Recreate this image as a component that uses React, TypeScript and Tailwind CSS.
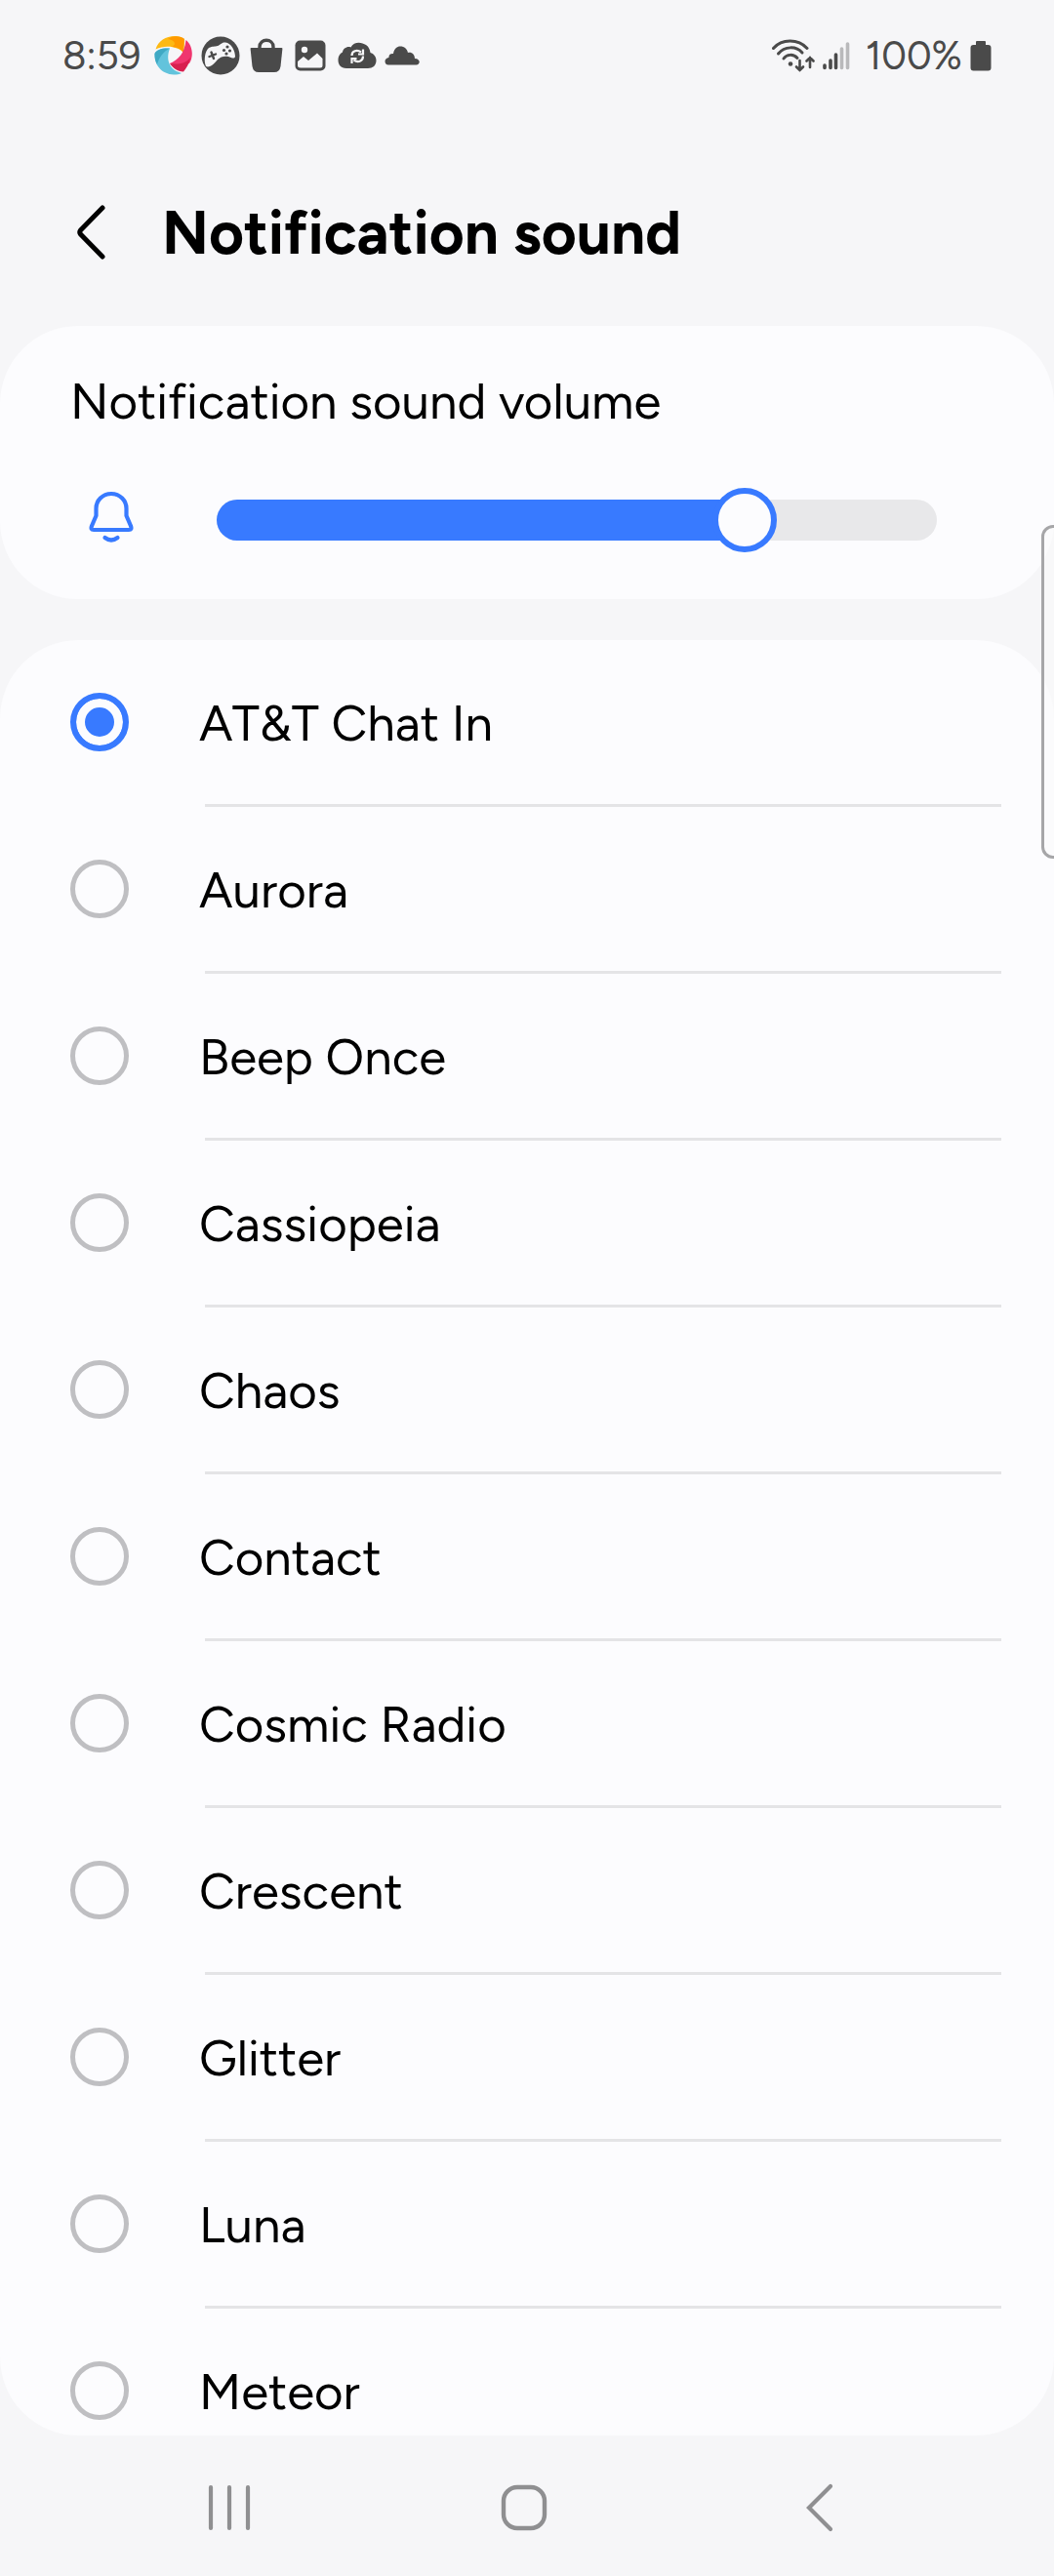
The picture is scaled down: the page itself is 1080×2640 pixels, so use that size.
import React, { useState } from "react";

const sounds = [
  "AT&T Chat In",
  "Aurora",
  "Beep Once",
  "Cassiopeia",
  "Chaos",
  "Contact",
  "Cosmic Radio",
  "Crescent",
  "Glitter",
  "Luna",
  "Meteor",
];

function PinwheelIcon() {
  return (
    <svg viewBox="0 0 40 40" className="size-10" aria-hidden="true">
      <path d="M1.5 13.5 C4 5 12 0 21 0 C25 0 28.500 1 31 3 L30 17 C25 11 12 8.500 1.500 13.500Z" fill="#fdb913" />
      <path d="M14 3 C20 -1 27 0 31 3 L30 17.500 C28 13 23 11 17 11 C24 9 21 4 14 3Z" fill="#ff9a00" />
      <path d="M32.500 4 C39 9 41 20 36 28 C31 30 24 31 16 28 C25 24 31 18 32.500 4Z" fill="#f0366f" />
      <path d="M37 22 C36 28 33 33 30 36.500 C24 36 19 33 16 28 C23 29 32 29 37 22Z" fill="#d81f4f" />
      <path d="M16 12.500 C8 12 2 14 0.500 18 C0 30 8 39 20 39.500 C23 39.500 26 39 28 38 C17 35 11 26 16 12.500Z" fill="#62c3dc" />
      <path d="M16 12.500 C8 12 2 14 0.500 18 C0.500 22 1 26 3 29 C5 22 9 16 16 12.500Z" fill="#3fa9c4" />
    </svg>
  );
}

function GameIcon() {
  return (
    <svg viewBox="0 0 40 40" className="size-10" aria-hidden="true">
      <circle cx="20" cy="20" r="19.500" fill="#4a4a4a" />
      <path
        d="M5 31 C2.500 25 4 15 8 12 C12 10 14 11 17 10 C20 9 21 6 25 6.500 C31 7 35 15 35 21 C34 24 31 22 28 21 C24 20 20 21 17 24 C14 28 9 33 5 31Z"
        fill="#f6f6f8"
      />
      <path d="M8.500 21 L15 18.500 M10.500 16.500 L13 23" stroke="#4a4a4a" strokeWidth="2.400" strokeLinecap="round" />
      <g fill="#4a4a4a">
        <circle cx="27" cy="11" r="1.600" />
        <circle cx="23.500" cy="14.500" r="1.600" />
        <circle cx="29.500" cy="15" r="1.600" />
        <circle cx="26" cy="18" r="1.600" />
      </g>
    </svg>
  );
}

function BagIcon() {
  return (
    <svg viewBox="0 0 34 36" className="h-9 w-[34px]" aria-hidden="true">
      <path d="M1.500 10 H32.500 Q33.500 10 33.400 11 L31.500 29 Q30.500 35 25 35 H9 Q3.500 35 2.500 29 L0.600 11 Q0.500 10 1.500 10Z" fill="#4a4a4a" />
      <path d="M10 11 V9 C10 0 24 0 24 9 V11" fill="none" stroke="#4a4a4a" strokeWidth="3.400" />
    </svg>
  );
}

function PictureIcon() {
  return (
    <svg viewBox="0 0 32 32" className="size-8" aria-hidden="true">
      <rect x="0.500" y="0.500" width="31" height="31" rx="5" fill="#4a4a4a" />
      <circle cx="10" cy="10" r="3.200" fill="#f6f6f8" />
      <path d="M3 22 L9 17 L14 21 L23 13.500 L28.500 19 V26 Q28.500 28.500 26 28.500 H6 Q3 28.500 3 26Z" fill="#f6f6f8" />
    </svg>
  );
}

function CloudSyncIcon() {
  return (
    <svg viewBox="0 0 40 28" className="h-7 w-10" aria-hidden="true">
      <path
        d="M9 27 C3 27 0.500 23 0.500 18.500 C0.500 14 3 11.500 5 10.500 C5.500 6.500 10 4 13.500 5.500 C16 1 21 0 25.500 1.500 C31 3 33 7 33.500 11 C37 12 39.500 15 39.500 19 C39.500 24 36 27 31 27Z"
        fill="#4a4a4a"
      />
      <g fill="none" stroke="#f6f6f8" strokeWidth="2.200">
        <path d="M14.500 14 C14.500 9 20 7.500 24 10.500 M26 14.500 C26 20 20.500 21.500 16.500 18.500" />
        <path d="M26 7.500 V12.500 H21 M14.500 22 V17 H19.500" />
      </g>
    </svg>
  );
}

function CloudIcon() {
  return (
    <svg viewBox="0 0 36 20" className="h-5 w-9" aria-hidden="true">
      <path
        d="M4 19.500 C-0.500 19.500 -1 12.500 4.500 12 C4 9 6.500 7.500 9 8 C10 2.500 13 0.500 16 0.500 C20.500 0.500 23 3 24 7 C28 6 31 9 31 13 C37 13 37 19.500 32.500 19.500Z"
        fill="#4a4a4a"
      />
    </svg>
  );
}

function WifiIcon() {
  return (
    <svg viewBox="0 0 44 34" className="h-[34px] w-11" aria-hidden="true">
      <g fill="none" stroke="#4a4a4a" strokeWidth="3" strokeLinecap="round">
        <path d="M1.500 9.500 C10 -0.500 27 -0.500 36 9.500" />
        <path d="M6.500 15 C13 7 25 7 31 14" />
        <path d="M12 20 C15 15.500 22 15 26 19.500" />
        <path d="M28.500 22 V32 M25 28.500 L28.500 32 L32 28.500" strokeWidth="2.600" />
        <path d="M39 29 V19 M35.500 22.500 L39 19 L42.500 22.500" strokeWidth="2.600" />
      </g>
      <circle cx="19" cy="25.500" r="2.300" fill="#4a4a4a" />
    </svg>
  );
}

function SignalIcon() {
  return (
    <svg viewBox="0 0 28 30" className="h-[30px] w-7" aria-hidden="true">
      <g strokeWidth="3.600" strokeLinecap="round">
        <path d="M2 25 V27.500 M8 20 V27.500 M13.500 14 V27.500" stroke="#4a4a4a" />
        <path d="M19.500 8 V27.500 M25.500 3 V27.500" stroke="#b9b9bb" />
      </g>
    </svg>
  );
}

function BatteryIcon() {
  return (
    <svg viewBox="0 0 22 32" className="h-8 w-[22px]" aria-hidden="true">
      <path d="M6 5 V2 Q6 1 7 1 H15 Q16 1 16 2 V5 H18.500 Q21.500 5 21.500 8 V28.500 Q21.500 31.500 18.500 31.500 H3.500 Q0.500 31.500 0.500 28.500 V8 Q0.500 5 3.500 5Z" fill="#4a4a4a" />
    </svg>
  );
}

function BellIcon() {
  return (
    <svg viewBox="0 0 48 60" className="h-15 w-12" fill="none" stroke="#387aff" strokeWidth="4.200" strokeLinecap="round" strokeLinejoin="round" aria-hidden="true">
      <path d="M24 3 C15 3 8.500 10 8.500 18 V25.500 L4 36 Q2.500 40 6 40 H42 Q45.500 40 44 36 L39.500 25.500 V18 C39.500 10 33 3 24 3Z" />
      <path d="M17.500 48 Q24 53 30.500 48" />
    </svg>
  );
}

function StatusBar() {
  return (
    <div className="flex h-[114px] shrink-0 items-center justify-between px-16 text-[40px] text-[#4a4a4a]">
      <div className="flex items-center">
        <span className="mr-3.5">8:59</span>
        <div className="flex items-center gap-2">
          <PinwheelIcon />
          <GameIcon />
        </div>
        <div className="ml-2.5 flex items-center gap-3">
          <BagIcon />
          <PictureIcon />
          <CloudSyncIcon />
        </div>
        <div className="ml-2">
          <CloudIcon />
        </div>
      </div>
      <div className="flex items-center">
        <WifiIcon />
        <div className="mr-4 ml-2">
          <SignalIcon />
        </div>
        <span className="mr-2">100%</span>
        <BatteryIcon />
      </div>
    </div>
  );
}

export default function App() {
  const [selected, setSelected] = useState(sounds[0]);
  const [volume, setVolume] = useState(11);

  return (
    <div className="relative flex h-screen flex-col overflow-hidden bg-[#f6f6f8] font-['Figtree','Roboto',sans-serif] text-black">
      <StatusBar />

      <header className="flex h-[220px] shrink-0 items-center pt-7 pl-[74px]">
        <button type="button" aria-label="Back" className="mr-14">
          <svg viewBox="0 0 36 58" className="h-[58px] w-9" fill="none" stroke="black" strokeWidth="5" strokeLinecap="round" strokeLinejoin="round" aria-hidden="true">
            <path d="M31 4 L8.500 27 Q7 29 8.500 31 L31 54" />
          </svg>
        </button>
        <h1 className="text-[62px] font-bold">Notification sound</h1>
      </header>

      <section className="mb-[42px] h-[280px] shrink-0 rounded-[80px] bg-[#fcfcfe] pt-[42px] pl-[72px]">
        <label htmlFor="volume" className="block text-[51px] leading-[72px]">
          Notification sound volume
        </label>
        <div className="mt-[50px] flex h-[70px] items-center pr-[120px] pl-[18px]">
          <BellIcon />
          <div className="relative ml-[84px] h-[42px] flex-1 rounded-full bg-[#e8e8ea]">
            <div className="h-full rounded-full bg-[#387aff]" style={{ width: `${(volume / 15) * 100}%` }} />
            <input
              id="volume"
              type="range"
              min={0}
              max={15}
              value={volume}
              onChange={(e) => setVolume(Number(e.target.value))}
              className="absolute inset-y-0 -right-[33px] -left-[33px] cursor-pointer appearance-none bg-transparent [&::-webkit-slider-thumb]:size-[66px] [&::-webkit-slider-thumb]:appearance-none [&::-webkit-slider-thumb]:rounded-full [&::-webkit-slider-thumb]:border-6 [&::-webkit-slider-thumb]:border-[#387aff] [&::-webkit-slider-thumb]:bg-[#fcfcfe]"
            />
          </div>
        </div>
      </section>

      <ul role="radiogroup" aria-label="Notification sound" className="min-h-0 flex-1 overflow-y-auto rounded-[80px] bg-[#fcfcfe] [scrollbar-width:none]">
        {sounds.map((name) => (
          <li key={name}>
            <label className="flex h-[168px] cursor-pointer items-center pl-[72px] text-[51px]">
              <input
                type="radio"
                name="sound"
                checked={selected === name}
                onChange={() => setSelected(name)}
                className="mr-[72px] size-[60px] shrink-0 appearance-none rounded-full border-5 border-[#bfbfc2] checked:border-6 checked:border-[#387aff] checked:bg-[#387aff] checked:shadow-[inset_0_0_0_9px_#fcfcfe]"
              />
              <span className="pt-1">{name}</span>
            </label>
            <div className="mr-[54px] ml-[210px] h-[3px] bg-[#e4e4e6]" />
          </li>
        ))}
      </ul>

      <nav className="grid h-36 shrink-0 grid-cols-3 place-items-center pt-1 pr-[89px] pl-[84px]">
        <button type="button" aria-label="Recent apps">
          <svg viewBox="0 0 48 48" className="size-12" fill="none" stroke="#8f8f91" strokeWidth="4.200" strokeLinecap="round" aria-hidden="true">
            <path d="M5 3 V45 M24 3 V45 M43 3 V45" />
          </svg>
        </button>
        <button type="button" aria-label="Home">
          <svg viewBox="0 0 48 48" className="size-12" fill="none" stroke="#8f8f91" strokeWidth="4.400" aria-hidden="true">
            <rect x="3" y="3" width="42" height="42" rx="14" />
          </svg>
        </button>
        <button type="button" aria-label="Back">
          <svg viewBox="0 0 32 50" className="h-[50px] w-8" fill="none" stroke="#8f8f91" strokeWidth="4.200" strokeLinecap="round" strokeLinejoin="miter" aria-hidden="true">
            <path d="M27 3 L5 25 L27 47" />
          </svg>
        </button>
      </nav>

      <div className="absolute top-[538px] -right-3 h-[342px] w-[25px] rounded-xl border-3 border-[#a6a6a8] bg-[#fafafa]/60" />
    </div>
  );
}
